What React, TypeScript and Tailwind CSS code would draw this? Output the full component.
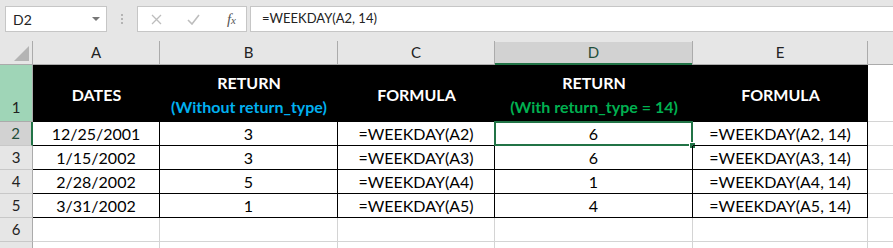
import React from 'react';

// Sheet data for rows 2-5
const rows = [
    ['12/25/2001', '3', '=WEEKDAY(A2)', '6', '=WEEKDAY(A2, 14)'],
    ['1/15/2002', '3', '=WEEKDAY(A3)', '6', '=WEEKDAY(A3, 14)'],
    ['2/28/2002', '5', '=WEEKDAY(A4)', '1', '=WEEKDAY(A4, 14)'],
    ['3/31/2002', '1', '=WEEKDAY(A5)', '4', '=WEEKDAY(A5, 14)'],
];

const letters = ['A', 'B', 'C', 'D', 'E'];
const font = { fontFamily: 'Lato, "Liberation Sans", sans-serif' };

function FormulaBar() {
    return (
        <div className="h-[41px] bg-[#e6e6e6] flex items-start pt-[6px] pl-[5px] gap-0">
            {/* Name box */}
            <div className="w-[102px] h-[26px] bg-white border border-[#c6c6c6] flex items-center justify-between pl-[7px] pr-[6px]">
                <span className="text-[14px] text-[#222]">D2</span>
                <svg width="8" height="5" viewBox="0 0 8 5"><path d="M0 0h8L4 4z" fill="#777" /></svg>
            </div>
            {/* Dots */}
            <div className="w-[30px] h-[26px] flex flex-col items-center justify-center gap-[2px]">
                <div className="w-[2px] h-[2px] bg-[#b4b4b4]"></div>
                <div className="w-[2px] h-[2px] bg-[#b4b4b4]"></div>
                <div className="w-[2px] h-[2px] bg-[#b4b4b4]"></div>
            </div>
            {/* Cancel / enter / fx */}
            <div className="w-[110px] h-[26px] bg-white border border-[#c6c6c6] flex items-center pl-[13px] pr-[10px] justify-between">
                <svg width="11" height="11" viewBox="0 0 11 11">
                    <path d="M1 1l9 9M10 1l-9 9" stroke="#bdbdbd" strokeWidth="1.3" fill="none" />
                </svg>
                <svg width="13" height="11" viewBox="0 0 13 11" className="ml-[10px]">
                    <path d="M1 6l4 4 7-9" stroke="#bdbdbd" strokeWidth="1.6" fill="none" />
                </svg>
                <span className="text-[#555] italic text-[15px] leading-none ml-[12px]" style={{ fontFamily: '"Liberation Serif", serif' }}>
                    f<span className="text-[11px]">x</span>
                </span>
            </div>
            {/* Formula input */}
            <div className="flex-1 ml-[3px] h-[26px] bg-white border border-[#c6c6c6] border-r-0 flex items-center pl-[11px]">
                <span className="text-[13px] text-[#222]">=WEEKDAY(A2, 14)</span>
            </div>
        </div>
    );
}

export default function App() {
    return (
        <div className="w-[893px] h-[248px] overflow-hidden bg-white" style={font}>
            <FormulaBar />

            <div className="grid grid-cols-[33px_127px_178px_157px_198px_175px_1fr] grid-rows-[24px_57px_24px_24px_24px_24px_24px_24px]">
                {/* Column headers */}
                <div className="bg-[#e6e6e6] border-r border-b border-[#ababab] flex items-end justify-end pr-[3px] pb-[3px]">
                    <svg width="15" height="15" viewBox="0 0 15 15"><path d="M15 0v15H0z" fill="#b4b4b4" /></svg>
                </div>
                {letters.map((l) => (
                    l === 'D' ? (
                        <div key={l} className="bg-[#e6e6e6] border-r border-[#ababab] flex">
                            <div className="flex-1 mt-[1px] bg-[#d2d2d2] border-b-2 border-[#217346] flex items-center justify-center text-[15px] text-[#1f4e3a]">{l}</div>
                        </div>
                    ) : (
                        <div key={l} className="bg-[#e6e6e6] border-r border-b border-[#ababab] flex items-center justify-center text-[15px] text-[#222]">{l}</div>
                    )
                ))}
                <div className="bg-[#e6e6e6] border-b border-[#ababab]"></div>

                {/* Row 1: header row */}
                <div className="bg-[#9fd5b7] border-r border-b border-[#ababab] flex items-end justify-center pb-[3px] text-[15px] text-[#222]">1</div>
                <div className="bg-black flex items-center justify-center pt-[3px] text-white font-bold text-[16px]">DATES</div>
                <div className="bg-black flex flex-col items-center justify-center pt-[3px] font-bold text-[16px] leading-6">
                    <span className="text-white">RETURN</span>
                    <span className="text-[#00b0f0]">(Without return_type)</span>
                </div>
                <div className="bg-black flex items-center justify-center pt-[3px] text-white font-bold text-[16px]">FORMULA</div>
                <div className="bg-black flex flex-col items-center justify-center pt-[3px] font-bold text-[16px] leading-6">
                    <span className="text-white">RETURN</span>
                    <span className="text-[#00b050]">(With return_type = 14)</span>
                </div>
                <div className="bg-black flex items-center justify-center pt-[3px] text-white font-bold text-[16px]">FORMULA</div>
                <div className="bg-white border-b border-[#d4d4d4]"></div>

                {/* Rows 2-5 */}
                {rows.map((r, i) => (
                    <React.Fragment key={i}>
                        <div className={i === 0
                            ? 'bg-[#d2d2d2] border-r-2 border-r-[#217346] border-b border-b-[#c8c8c8] flex items-center justify-center text-[15px] text-[#1f4e3a]'
                            : 'bg-[#e6e6e6] border-r border-b border-r-[#ababab] border-b-[#c8c8c8] flex items-center justify-center text-[15px] text-[#222]'}>
                            {i + 2}
                        </div>
                        {r.map((v, j) => (
                            <div key={j} className="relative border-r border-b border-black flex items-center justify-center text-[16px] text-black">
                                {v}
                                {i === 0 && j === 3 && (
                                    <>
                                        <div className="absolute -left-px -top-px -right-px -bottom-px border-2 border-[#217346]"></div>
                                        <div className="absolute -right-[4px] -bottom-[4px] w-[7px] h-[7px] bg-[#217346] border border-white"></div>
                                    </>
                                )}
                            </div>
                        ))}
                        <div className="border-b border-[#d4d4d4]"></div>
                    </React.Fragment>
                ))}

                {/* Row 6 and the top of row 7 (number out of view) */}
                {['6', ''].map((n, k) => (
                    <React.Fragment key={k}>
                        <div className="bg-[#e6e6e6] border-r border-b border-r-[#ababab] border-b-[#c8c8c8] flex items-center justify-center text-[15px] text-[#222]">{n}</div>
                        {letters.map((l) => (
                            <div key={l} className="border-r border-b border-[#d4d4d4]"></div>
                        ))}
                        <div className="border-b border-[#d4d4d4]"></div>
                    </React.Fragment>
                ))}
            </div>
        </div>
    );
}
